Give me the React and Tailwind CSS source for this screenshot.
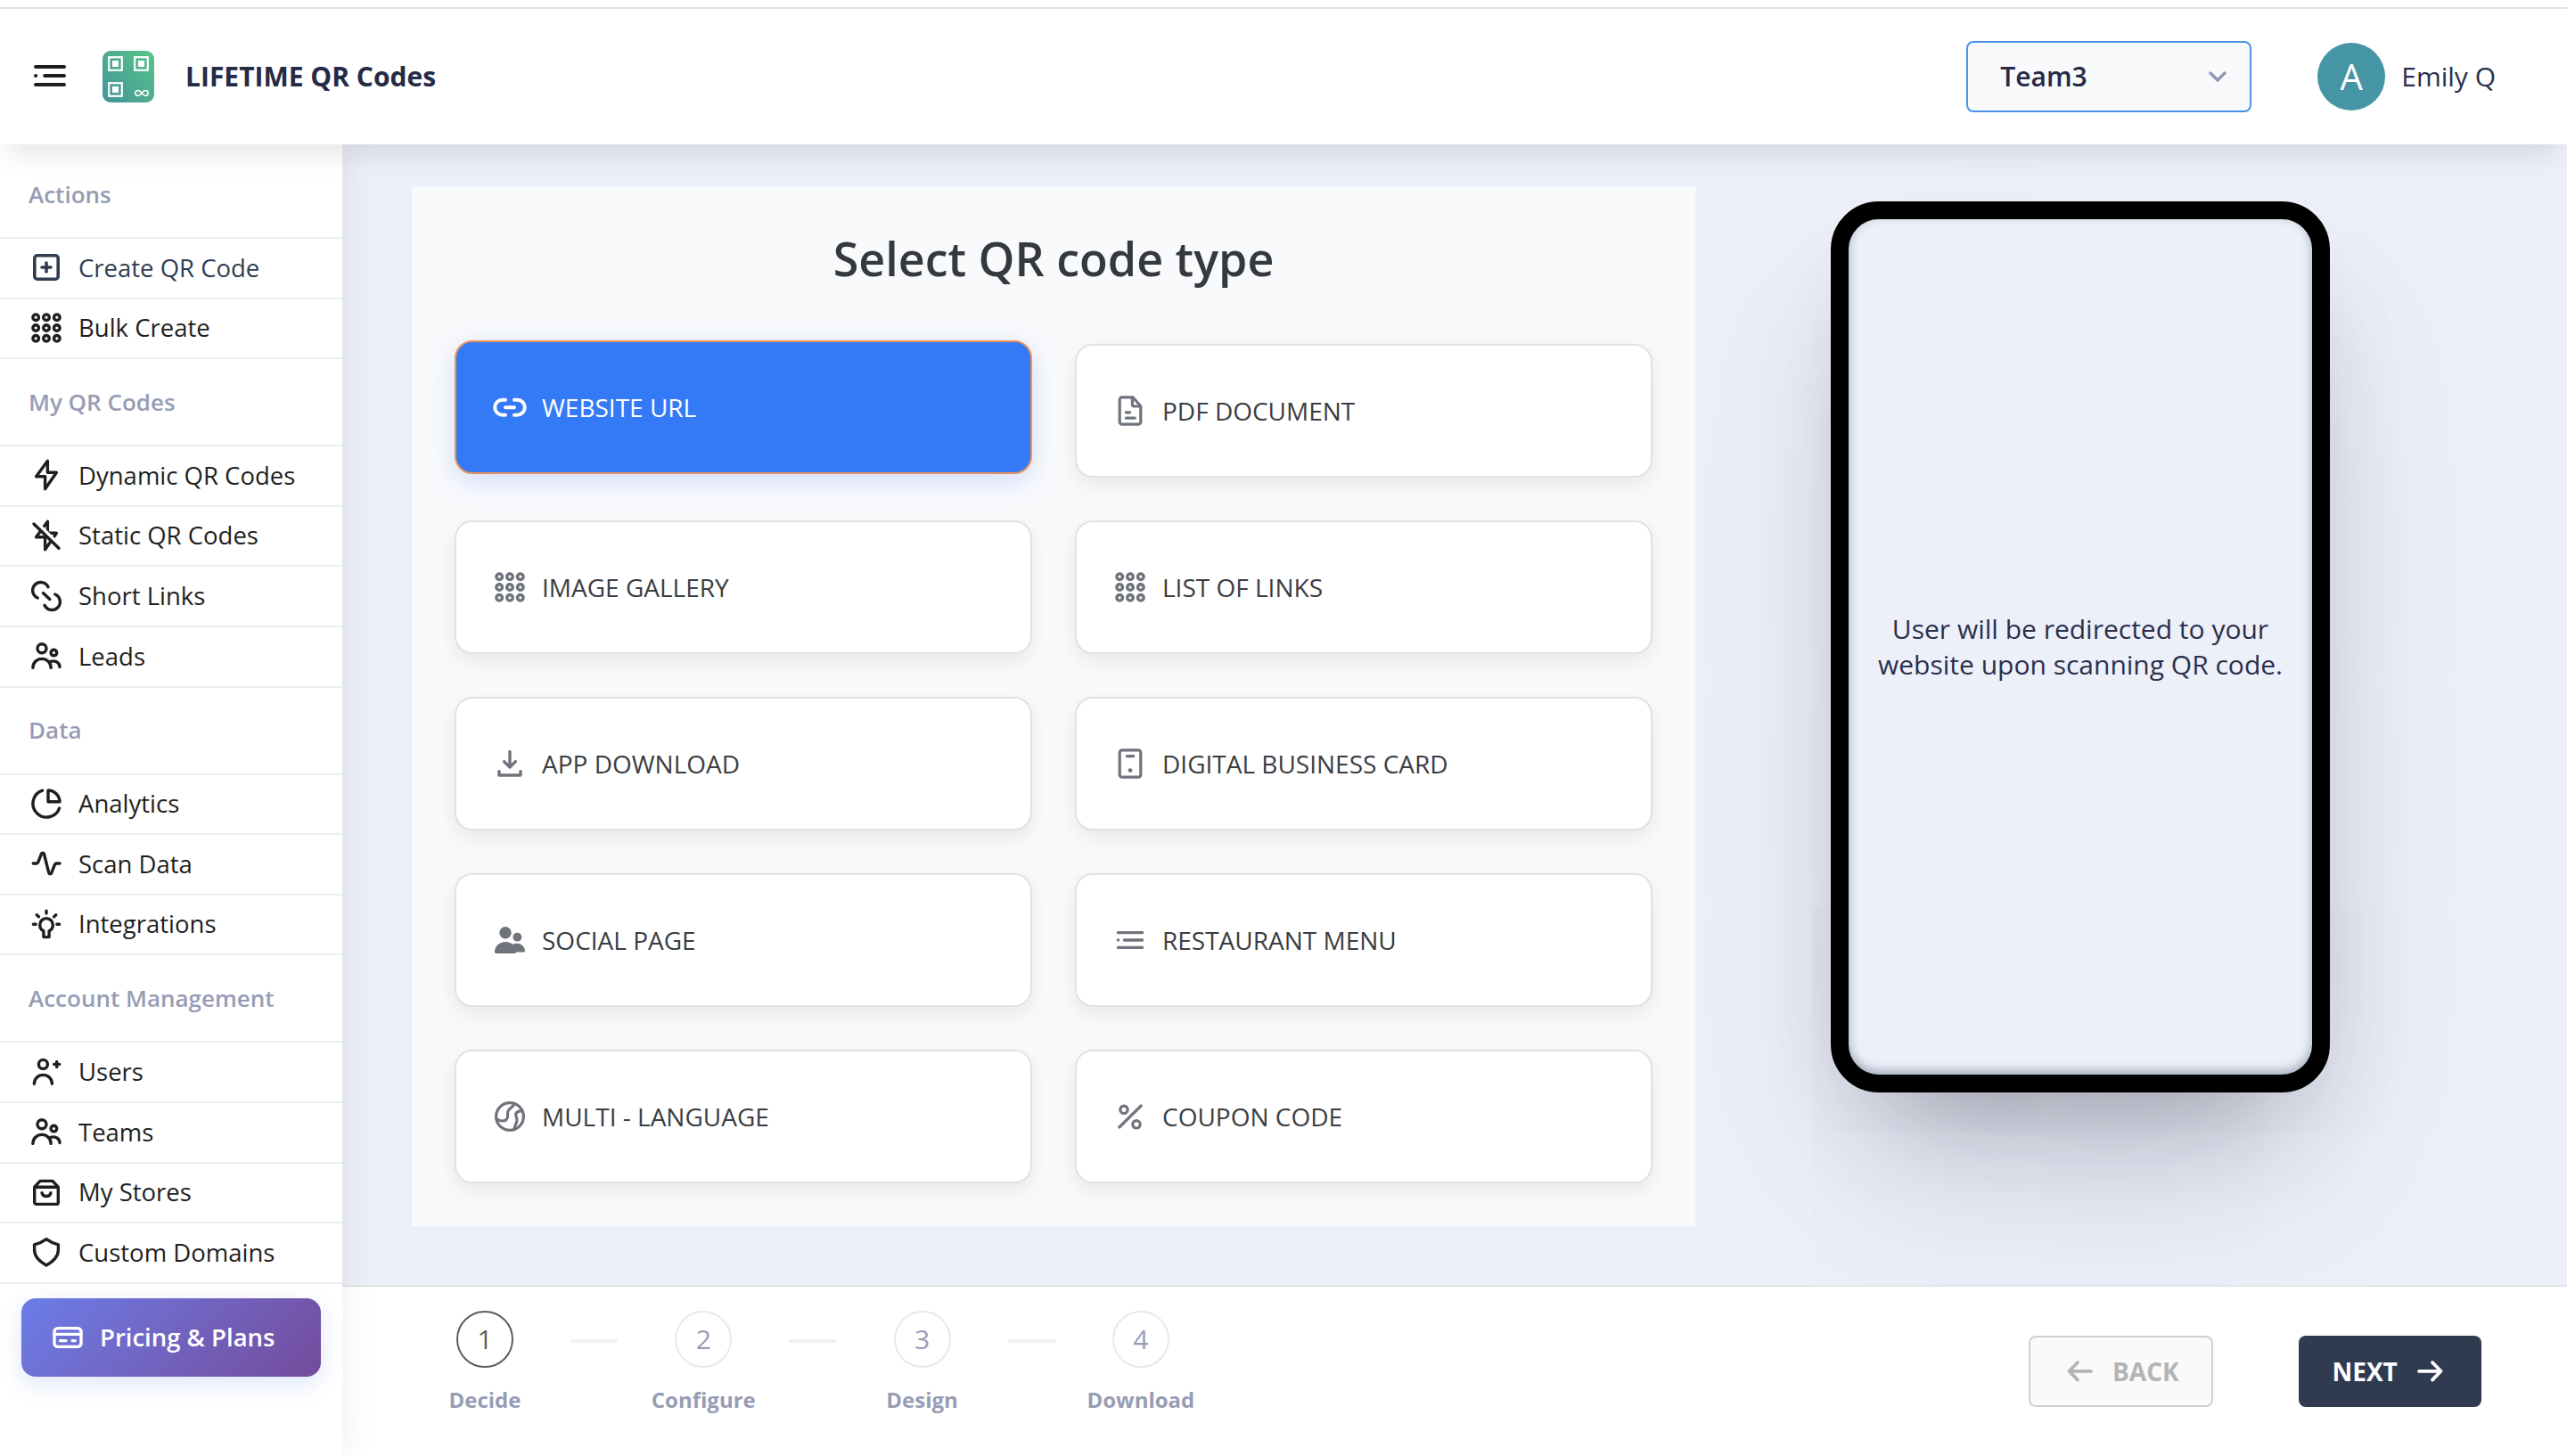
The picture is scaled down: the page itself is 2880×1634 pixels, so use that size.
import React, { useState } from 'react';
import clsx from 'clsx';

// Icons share a 40x40 box
const Icon = ({ children, strokeWidth = 3.4, className }) => (
  <svg
    viewBox="0 0 40 40"
    fill="none"
    stroke="currentColor"
    strokeWidth={strokeWidth}
    strokeLinecap="round"
    strokeLinejoin="round"
    className={clsx('h-10 w-10 shrink-0', className)}
  >
    {children}
  </svg>
);

const MenuIcon = (props) => (
  <Icon strokeWidth={4} {...props}>
    <path d="M4 9h32M14.2 19h21.8M4 29h32" />
    <path d="M4 19h.1" />
  </Icon>
);

const CreateIcon = () => (
  <Icon strokeWidth={3.6}>
    <rect x="6.8" y="6.8" width="26.4" height="26.4" rx="3" />
    <path d="M20 15v10M15 20h10" />
  </Icon>
);

const GridIcon = () => (
  <Icon>
    {[8.2, 20, 31.8].map((cy) =>
      [8.2, 20, 31.8].map((cx) => <circle key={`${cx}-${cy}`} cx={cx} cy={cy} r="3.3" />)
    )}
  </Icon>
);

const BoltIcon = () => (
  <Icon>
    <path d="M21.4 4.3L8.6 21.8h10v13.9l12.8-18.4h-10z" />
  </Icon>
);

const BoltOffIcon = () => (
  <Icon>
    <path d="M21.4 4.3L8.6 21.8h10v13.9l12.8-18.4h-10z" />
    <path d="M7.6 4.2l28.6 28.2" stroke="#fff" strokeWidth="4" />
    <path d="M6 7l28 27.2" />
  </Icon>
);

const ShortLinkIcon = () => (
  <Icon>
    <path d="M22 9.8A9.1 9.1 0 1 0 10.2 22M29.8 18A9.1 9.1 0 1 1 18 30.2M16.4 16.6l7.4 7" />
  </Icon>
);

const PeopleIcon = () => (
  <Icon>
    <circle cx="15" cy="11.8" r="5" />
    <circle cx="28.4" cy="16.6" r="3.3" />
    <path d="M4.9 33.4c0-5.6 4.4-10 10.1-10s10.1 4.4 10.1 10" />
    <path d="M24.4 26.6c4.6-2 10.6.6 10.6 6" />
  </Icon>
);

const PieIcon = () => (
  <Icon>
    <path d="M15.6 5.2A15.3 15.3 0 1 0 34.6 25" />
    <path d="M22 5a13.2 13.2 0 0 1 13 12.8H22z" />
  </Icon>
);

const PulseIcon = () => (
  <Icon>
    <path d="M5.2 20h3.6c1 0 1.7-.6 2.1-1.6l3.6-9.2c.6-1.5 2.5-1.4 2.9.1l5.4 21.4c.4 1.5 2.3 1.6 2.9.1l3.6-9.2c.4-1 1.1-1.6 2.1-1.6h3.6" />
  </Icon>
);

const BulbIcon = () => (
  <Icon>
    <path d="M16.9 34.6v-6.9c-2.7-1.3-4.2-3.9-4.2-6.8a7.3 7.3 0 0 1 14.6 0c0 2.9-1.5 5.5-4.2 6.8v6.9z" />
    <path d="M20 5.3v2.8M5.4 20.3h2.8M31.8 20.3h2.8M9.2 9.7l2.2 2.1M30.8 9.7l-2.2 2.1" />
  </Icon>
);

const UserPlusIcon = () => (
  <Icon>
    <circle cx="16.4" cy="11.4" r="5" />
    <path d="M6.4 33.2c0-5.6 4.3-9.8 10-9.8s10 4.2 10 9.8M31.7 8.4v6M28.7 11.4h6" />
  </Icon>
);

const BagIcon = () => (
  <Icon>
    <path d="M6.7 14.2L13 7.4h14l6.3 6.8v17a2.2 2.2 0 0 1-2.2 2.2H8.9a2.2 2.2 0 0 1-2.2-2.2zM6.7 14.2h26.6" />
    <path d="M15 20.6c1 5.2 9 5.2 10 0" />
  </Icon>
);

const ShieldIcon = () => (
  <Icon>
    <path d="M20 5.6c4 3 8.6 5 13.4 6.2v6c0 6.8-5.4 12.8-13.4 17.2-8-4.4-13.4-10.4-13.4-17.2v-6C11.4 10.6 16 8.6 20 5.6z" />
  </Icon>
);

const CardIcon = () => (
  <Icon>
    <rect x="5" y="9.6" width="30" height="20.8" rx="4" />
    <path d="M5 16.4h30M11.5 23.6h6.5M25.2 23.6h3" />
  </Icon>
);

const LinkIcon = () => (
  <Icon strokeWidth={4}>
    <path d="M15 11.7h-3.3a8.5 8.5 0 0 0 0 17H15M25 11.7h3.3a8.5 8.5 0 0 1 0 17H25M15 20.2h10" />
  </Icon>
);

const DocIcon = () => (
  <Icon strokeWidth={3.2}>
    <path d="M23 4.8H11a2.8 2.8 0 0 0-2.8 2.8v24.8a2.8 2.8 0 0 0 2.8 2.8h18a2.8 2.8 0 0 0 2.8-2.8V15z" />
    <path d="M22.4 5v7.8a2.2 2.2 0 0 0 2.2 2.2h7M15.4 21.8h4.2M15.4 28.2h9.8" />
  </Icon>
);

const BusinessCardIcon = () => (
  <Icon strokeWidth={3.2}>
    <rect x="8.2" y="4.8" width="23.6" height="30.4" rx="2.8" />
    <path d="M16.4 11.6h7.4" />
    <circle cx="20" cy="27.6" r="2.4" fill="currentColor" stroke="none" />
  </Icon>
);

const DownloadIcon = () => (
  <Icon strokeWidth={3.4}>
    <path d="M20 6.5V24M13.6 17.6L20 24l6.4-6.4M8 28.6V33h24v-4.4" />
  </Icon>
);

const PeopleSolidIcon = () => (
  <Icon>
    <g fill="currentColor" stroke="none">
      <circle cx="15" cy="11.7" r="6.7" />
      <circle cx="28.4" cy="16.7" r="4.9" />
      <path d="M3 33.6C3 27 8.3 22 15 22c3 0 5.8 1 8 2.8 1.5-.7 3.4-1.2 5.4-1 5 .3 8.6 4.1 8.6 8.6 0 .7-.5 1.2-1.2 1.2H27c0 1-.5 1.4-1.4 1.4H4.4c-.9 0-1.4-.5-1.4-1.4z" />
    </g>
  </Icon>
);

const GlobeIcon = () => (
  <Icon strokeWidth={3.2}>
    <circle cx="20" cy="20" r="15.4" />
    <path d="M25 5.6c-.8 4.2-7.4 5-7.4 10v4c0 3.2-2.3 5.4-5.6 5.4-2.8 0-4.4-.6-7-2.2M34.2 14c-4.8-.6-8 1.4-7.4 4.6.3 1.8 1.2 3 1.2 5.4 0 3.8-2.6 5.6-3 9.8" />
  </Icon>
);

const ListIcon = () => (
  <Icon strokeWidth={3.3}>
    <path d="M6.4 11.7h27.2M13.4 20h20.2M6.4 28.3h27.2M6.4 20h.1" />
  </Icon>
);

const PercentIcon = () => (
  <Icon strokeWidth={3.2}>
    <circle cx="13" cy="12.3" r="4.2" />
    <circle cx="27" cy="28.8" r="4.2" />
    <path d="M32.2 8L7.8 32" />
  </Icon>
);

const ArrowLeft = () => (
  <Icon strokeWidth={3.8}>
    <path d="M17 10L7.5 19.8 17 29.6M8 19.8h24" />
  </Icon>
);

const ArrowRight = () => (
  <Icon strokeWidth={3.8}>
    <path d="M23 10l9.5 9.8L23 29.6M32 19.8H8" />
  </Icon>
);

const Logo = () => (
  <svg viewBox="0 0 58 58" className="h-[58px] w-[58px]" fill="none">
    <defs>
      <linearGradient id="logo" x1="0" y1="58" x2="58" y2="0" gradientUnits="userSpaceOnUse">
        <stop offset="0" stopColor="#43949a" />
        <stop offset="1" stopColor="#57c587" />
      </linearGradient>
    </defs>
    <rect width="58" height="58" rx="9" fill="url(#logo)" />
    {[[6, 6], [35, 6], [6, 35]].map(([x, y]) => (
      <g key={`${x}-${y}`}>
        <rect x={x + 1.2} y={y + 1.2} width="14.6" height="14.6" stroke="#fff" strokeWidth="2.2" />
        <rect x={x + 5} y={y + 5} width="7" height="7" fill="#fff" />
      </g>
    ))}
    <path
      d="M44 47.5c-1.4-1.9-2.6-2.9-4.3-2.9a2.9 2.9 0 0 0 0 5.8c1.7 0 2.9-1 4.3-2.9s2.6-2.9 4.3-2.9a2.9 2.9 0 0 1 0 5.8c-1.7 0-2.9-1-4.3-2.9z"
      stroke="#fff"
      strokeWidth="1.5"
    />
  </svg>
);

const menu = [
  {
    title: 'Actions',
    items: [
      { label: 'Create QR Code', icon: CreateIcon, active: true },
      { label: 'Bulk Create', icon: GridIcon },
    ],
  },
  {
    title: 'My QR Codes',
    items: [
      { label: 'Dynamic QR Codes', icon: BoltIcon },
      { label: 'Static QR Codes', icon: BoltOffIcon },
      { label: 'Short Links', icon: ShortLinkIcon },
      { label: 'Leads', icon: PeopleIcon },
    ],
  },
  {
    title: 'Data',
    items: [
      { label: 'Analytics', icon: PieIcon },
      { label: 'Scan Data', icon: PulseIcon },
      { label: 'Integrations', icon: BulbIcon },
    ],
  },
  {
    title: 'Account Management',
    items: [
      { label: 'Users', icon: UserPlusIcon },
      { label: 'Teams', icon: PeopleIcon },
      { label: 'My Stores', icon: BagIcon },
      { label: 'Custom Domains', icon: ShieldIcon },
    ],
  },
];

const qrTypes = [
  { label: 'WEBSITE URL', icon: LinkIcon },
  { label: 'PDF DOCUMENT', icon: DocIcon },
  { label: 'IMAGE GALLERY', icon: GridIcon },
  { label: 'LIST OF LINKS', icon: GridIcon },
  { label: 'APP DOWNLOAD', icon: DownloadIcon },
  { label: 'DIGITAL BUSINESS CARD', icon: BusinessCardIcon },
  { label: 'SOCIAL PAGE', icon: PeopleSolidIcon },
  { label: 'RESTAURANT MENU', icon: ListIcon },
  { label: 'MULTI - LANGUAGE', icon: GlobeIcon },
  { label: 'COUPON CODE', icon: PercentIcon },
];

const steps = ['Decide', 'Configure', 'Design', 'Download'];

const Header = () => (
  <header className="relative z-30 flex h-[162px] shrink-0 flex-col bg-white shadow-[0_20px_30px_-10px_rgba(0,0,0,0.11)]">
    <div className="mt-2 h-0.5 bg-[#e2e2e3]" />
    <div className="flex flex-1 items-center pl-9 pr-20">
      <MenuIcon className="text-[#1d1d1f]" />
      <div className="ml-[39px]">
        <Logo />
      </div>
      <h1 className="ml-[35px] pb-0.5 text-[30px] font-bold text-[#252a45]">LIFETIME QR Codes</h1>
      <div className="ml-auto flex items-center">
        <button className="flex h-20 w-80 items-center justify-between rounded-lg border-2 border-[#4a93e8] bg-[#f8fafc] pl-9 pr-[26px] text-[30px] font-semibold text-[#252a45]">
          <span className="pb-0.5">Team3</span>
          <svg viewBox="0 0 20 12" className="h-3 w-5" fill="none" stroke="#9499b3" strokeWidth="3.5" strokeLinecap="round" strokeLinejoin="round">
            <path d="M2 2l8 8 8-8" />
          </svg>
        </button>
        <div className="ml-[74px] flex h-[76px] w-[76px] items-center justify-center rounded-full bg-[#4595a4] text-[40px] text-white">
          A
        </div>
        <span className="ml-[18px] pb-0.5 text-[30px] text-[#2b2f4c]">Emily Q</span>
      </div>
    </div>
  </header>
);

const Sidebar = () => (
  <aside className="relative z-20 w-96 shrink-0 bg-white pt-2 shadow-[0_0_40px_rgba(0,0,0,0.08)]">
    {menu.map((section) => (
      <div key={section.title}>
        <div className="flex h-[98px] items-center border-b-2 border-[#eceef4] pl-8 text-[26px] font-semibold text-[#979cb5]">
          {section.title}
        </div>
        {section.items.map(({ label, icon: ItemIcon, active }) => (
          <a
            key={label}
            className={clsx(
              'flex h-[67.6px] items-center gap-4 border-b-2 border-[#eceef4] pb-px pl-8 text-[27.5px]',
              active ? 'text-[#2f3d50]' : 'text-[#1f1f21]'
            )}
          >
            <ItemIcon />
            {label}
          </a>
        ))}
      </div>
    ))}
    <button className="ml-6 mt-4 flex h-[88px] w-[336px] items-center gap-4 rounded-2xl bg-linear-135 from-[#6a7de8] to-[#734b9b] pl-8 text-[27.5px] font-semibold text-white shadow-[0_8px_24px_rgba(102,126,234,0.2)]">
      <CardIcon />
      Pricing &amp; Plans
    </button>
  </aside>
);

const TypeCard = ({ label, icon: TypeIcon, selected, onClick }) => (
  <button
    onClick={onClick}
    className={clsx(
      'flex h-[150px] items-center gap-4 rounded-[20px] border-2 pl-10 text-[28px]',
      selected
        ? '-translate-y-1 border-[#e9935a] bg-[#347af6] pb-px text-white shadow-[0_8px_30px_rgba(52,100,246,0.2)]'
        : 'border-[#e0e2e5] bg-white text-[#3a3d42] shadow-[0_8px_24px_rgba(0,0,0,0.08)]'
    )}
  >
    <span className={selected ? 'text-white' : 'text-[#6f737b]'}>
      <TypeIcon />
    </span>
    {label}
  </button>
);

const PhonePreview = () => (
  <div className="flex h-[1000px] w-[560px] items-center justify-center rounded-[54px] border-[20px] border-black bg-[#edf0f9] text-center text-[30px] leading-[40.5px] text-[#2b2f4c] shadow-[0_100px_200px_-40px_rgba(50,50,93,0.25),0_60px_120px_-60px_rgba(0,0,0,0.3),inset_0_-4px_12px_0_rgba(10,37,64,0.35)]">
    <p>
      User will be redirected to your
      <br />
      website upon scanning QR code.
    </p>
  </div>
);

const Footer = () => (
  <footer className="relative z-10 flex h-[192px] items-start justify-between border-t-2 border-[#e2e3e8] bg-white pl-20 pr-24">
    <div className="flex pt-[27px]">
      {steps.map((step, i) => (
        <React.Fragment key={step}>
          {i > 0 && (
            <div className="flex w-[85.3px] justify-center pt-8">
              <div className="h-1 w-[53px] bg-[#f0f0f6]" />
            </div>
          )}
          <div className="flex w-40 flex-col items-center">
            <div
              className={clsx(
                'flex h-16 w-16 items-center justify-center rounded-full border-2 pb-0.5 text-[30px]',
                i === 0 ? 'border-[#56605f] text-[#56605f]' : 'border-[#e6e9f1] text-[#979cb5]'
              )}
            >
              {i + 1}
            </div>
            <div className="mt-5 text-2xl font-bold text-[#979cb5]">{step}</div>
          </div>
        </React.Fragment>
      ))}
    </div>
    <div className="flex gap-24 pt-[55px] text-[28px] font-bold">
      <button className="flex h-20 w-[207px] items-center gap-4 rounded-lg border-2 border-[#d0d0d0] bg-[#fafafa] pl-9 text-[#b4b4b4]">
        <ArrowLeft />
        BACK
      </button>
      <button className="flex h-20 w-[205px] items-center gap-4 rounded-lg bg-[#303b4f] pl-[37.5px] text-white">
        NEXT
        <ArrowRight />
      </button>
    </div>
  </footer>
);

export default function App() {
  const [selectedType, setSelectedType] = useState('WEBSITE URL');

  return (
    <div className="flex h-[1634px] w-[2880px] flex-col overflow-hidden bg-white font-['Open_Sans',sans-serif]">
      <Header />
      <div className="flex min-h-0 flex-1">
        <Sidebar />
        <div className="flex flex-1 flex-col">
          <main className="flex flex-1 items-start bg-[#edf0f9] pl-[78px] pt-12">
            <section className="h-[1166px] w-[1440px] bg-[#f9fafc] px-12 pt-[41px]">
              <h2 className="h-[135px] text-center text-[52px] font-semibold text-[#35393d]">Select QR code type</h2>
              <div className="grid grid-cols-2 gap-12">
                {qrTypes.map((type) => (
                  <TypeCard
                    key={type.label}
                    {...type}
                    selected={type.label === selectedType}
                    onClick={() => setSelectedType(type.label)}
                  />
                ))}
              </div>
            </section>
            <div className="ml-[152px] pt-4">
              <PhonePreview />
            </div>
          </main>
          <Footer />
        </div>
      </div>
    </div>
  );
}
